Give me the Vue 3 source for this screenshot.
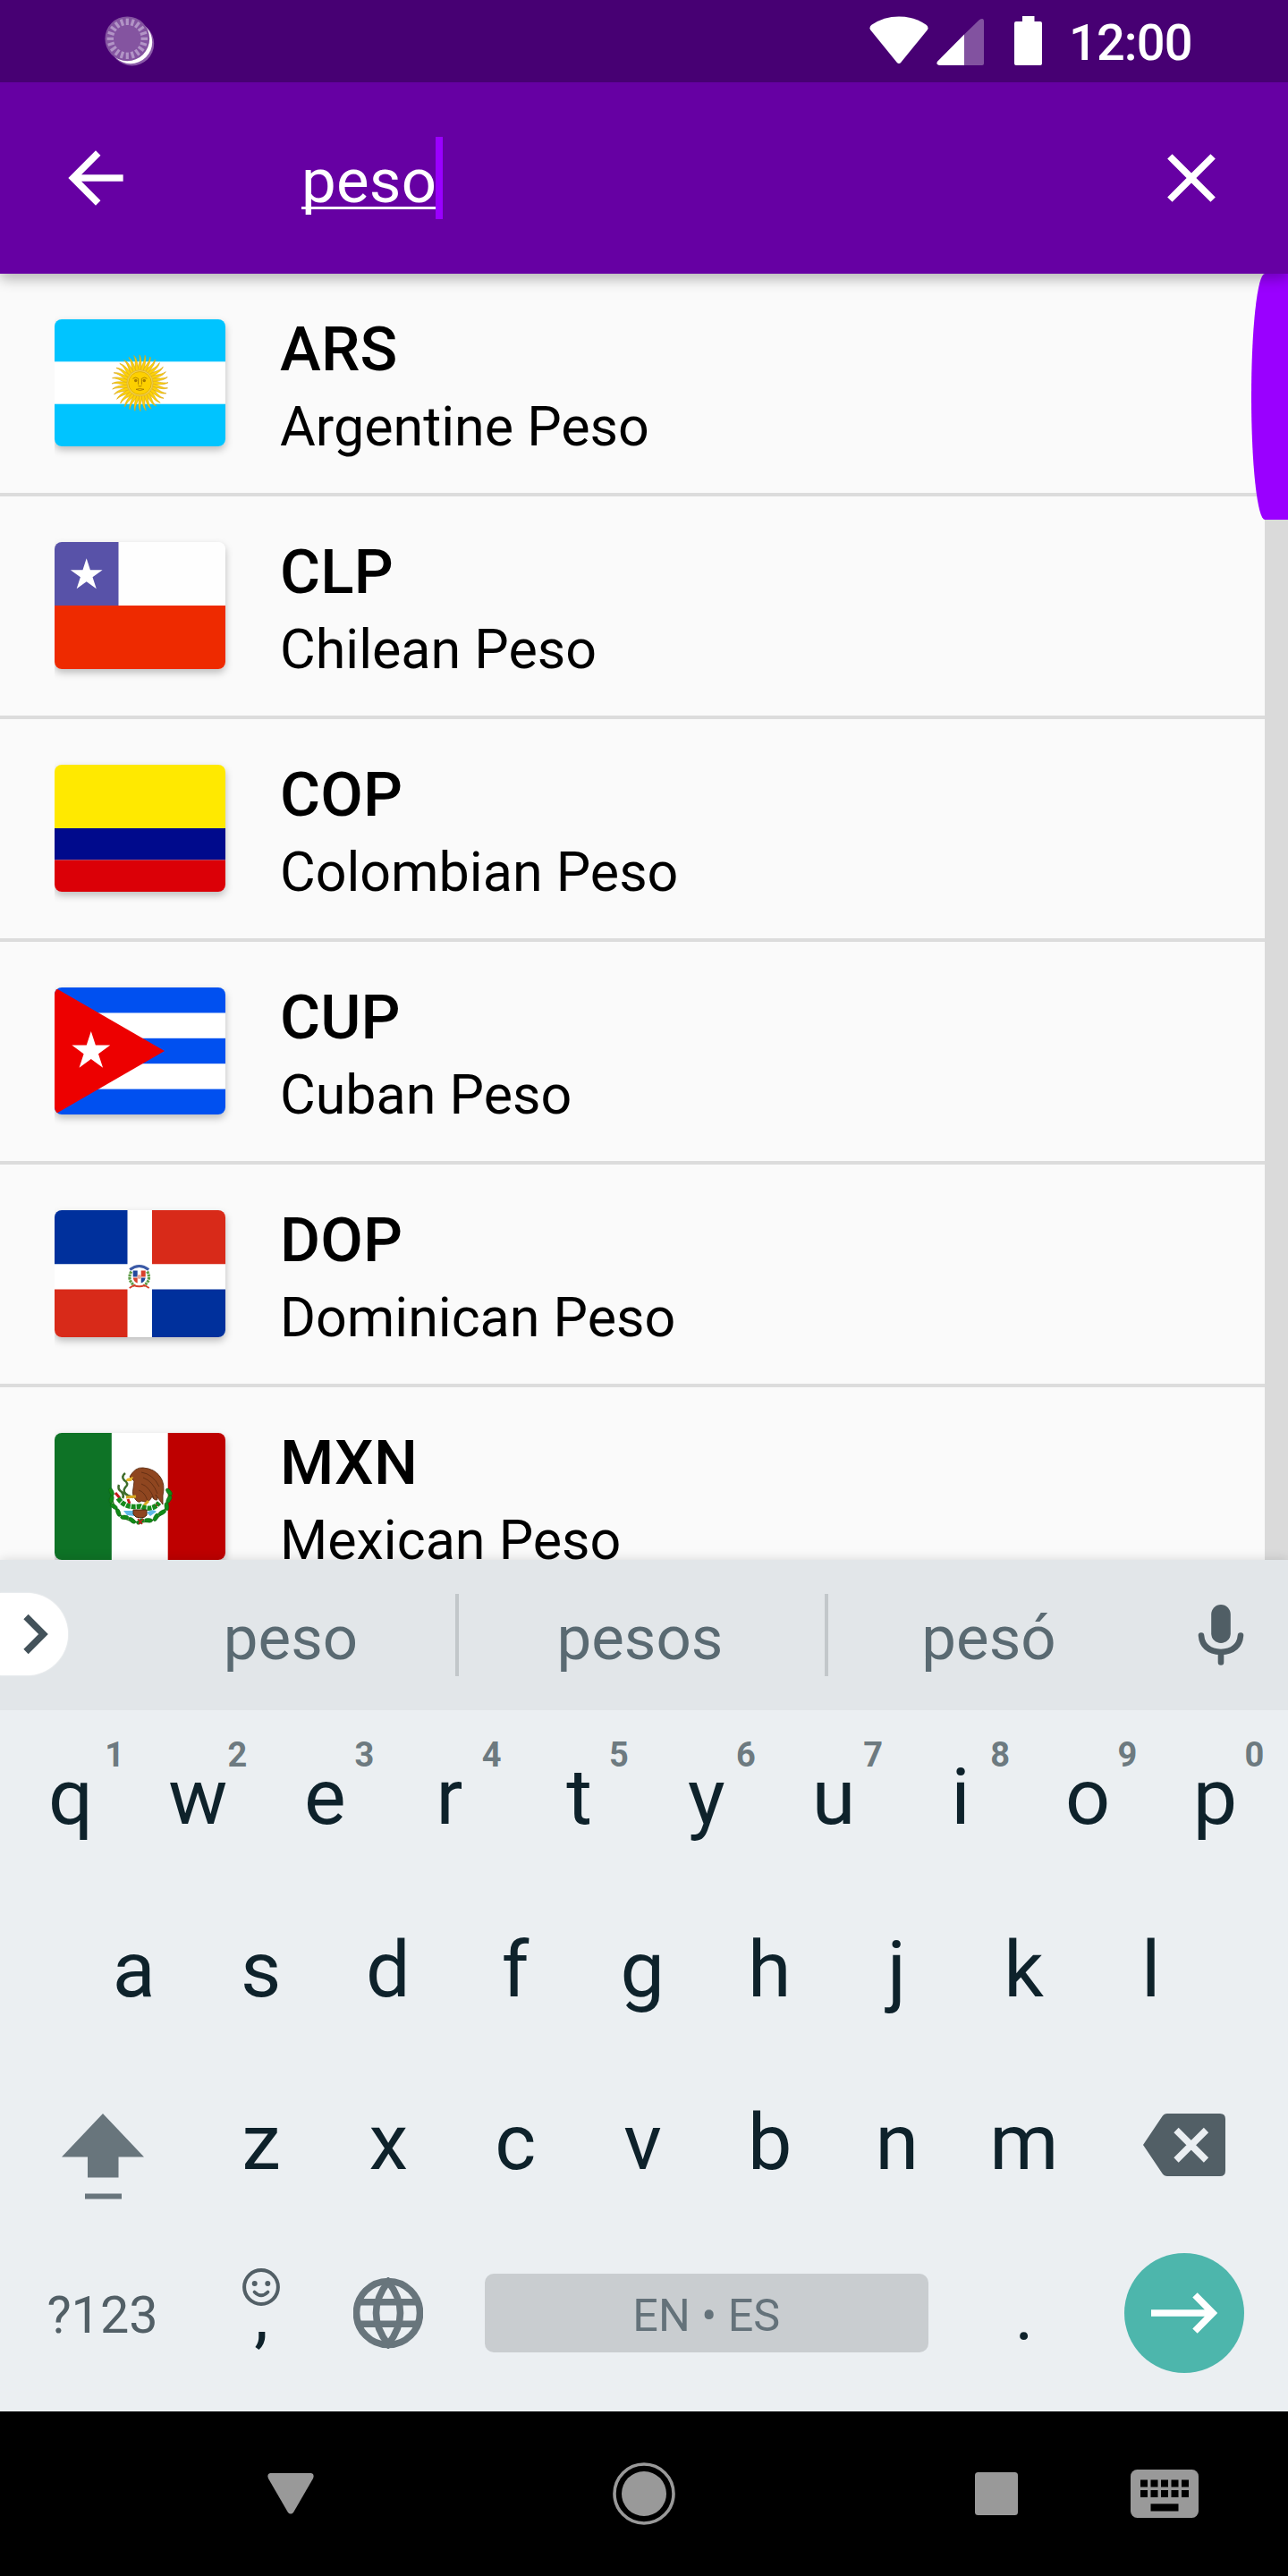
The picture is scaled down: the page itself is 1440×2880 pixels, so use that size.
<script setup>
const currencies = [
  { code: 'ARS', name: 'Argentine Peso' },
  { code: 'CLP', name: 'Chilean Peso' },
  { code: 'COP', name: 'Colombian Peso' },
  { code: 'CUP', name: 'Cuban Peso' },
  { code: 'DOP', name: 'Dominican Peso' },
  { code: 'MXN', name: 'Mexican Peso' },
]

const topKeys = 'qwertyuiop'.split('').map((letter, i) => ({ letter, digit: (i + 1) % 10 }))
const homeKeys = 'asdfghjkl'.split('')
const bottomKeys = 'zxcvbnm'.split('')

// angles helper for radial marks
const ring = (n) => Array.from({ length: n }, (_, i) => (i * 360) / n)
const keyDots = [0, 1, 2, 3, 4]
// wreath leaves below the eagle: x, y, rotation
const leaves = Array.from({ length: 13 }, (_, i) => {
  const a = ((-8 + i * (196 / 12)) * Math.PI) / 180
  return { x: 95.8 + 32.5 * Math.cos(a), y: 70 + 29 * Math.sin(a), r: (a * 180) / Math.PI + 60 + (i % 2) * 50 }
})
</script>

<template>
  <div class="screen">
    <div class="status">
      <svg class="sync" width="56" height="58" viewBox="117 17 56 58">
        <circle cx="147.6" cy="48.8" r="24.6" fill="#8a5aa8" />
        <circle cx="146" cy="47" r="24.2" fill="#fff" />
        <circle cx="142.3" cy="43.3" r="24.9" fill="#8454a0" />
        <g stroke="#b294c6" stroke-width="3.2">
          <line v-for="a in ring(20)" :key="a" x1="142.3" y1="20.6" x2="142.3" y2="28" :transform="`rotate(${a} 142.3 43.3)`" />
        </g>
      </svg>
      <svg class="tray" width="200" height="60" viewBox="970 16 200 60" fill="#fff">
        <path d="M1007.5 69.5Q1005 72.500 1002.500 69.500L973.600 34Q971 30.500 974.500 27.800Q988 18.500 1005 18.500Q1022 18.500 1035.500 27.800Q1039 30.500 1036.400 34Z" />
        <path d="M1078 38.500V73H1050Q1046 72 1048 68.800Z" />
        <path d="M1078 38.500L1094.500 22.500Q1100 19 1100 24V71Q1100 73 1098 73H1078Z" opacity=".32" />
        <path d="M1143 18H1156.500V24H1163Q1165 24 1165 26V71Q1165 73 1163 73H1136Q1134 73 1134 71V26Q1134 24 1136 24H1143Z" />
      </svg>
      <span class="clock">12:00</span>
    </div>

    <header class="appbar">
      <svg class="back" width="92" height="92" viewBox="0 0 24 24" fill="#fff">
        <path d="M20 11H7.830l5.590-5.590L12 4l-8 8 8 8 1.410-1.410L7.830 13H20z" />
      </svg>
      <div class="query"><span class="typed">peso</span><i class="caret"></i></div>
      <svg class="clear" width="92" height="92" viewBox="0 0 24 24" fill="#fff">
        <path d="M19 6.410L17.590 5 12 10.590 6.410 5 5 6.410 10.590 12 5 17.590 6.410 19 12 13.410 17.590 19 19 17.590 13.410 12z" />
      </svg>
    </header>

    <main class="list">
      <div v-for="c in currencies" :key="c.code" class="row">
        <div class="flag">
          <svg v-if="c.code === 'ARS'" viewBox="0 0 191 142">
            <rect width="191" height="142" fill="#00c4ff" />
            <rect y="47.300" width="191" height="47.400" fill="#fff" />
            <g transform="translate(95.500 71.300)">
              <g fill="#fcd20a" stroke="#d9a514" stroke-width=".6">
                <path v-for="a in ring(32)" :key="a" d="M-1.900 -14C-3 -20 .8 -23 -.6 -31.500C2.800 -26 .6 -21 1.900 -14Z" :transform="`rotate(${a})`" />
              </g>
              <circle r="14.600" fill="#f5d74a" stroke="#e0b93a" stroke-width="1" />
              <circle r="12.800" fill="#fdd000" stroke="#d9a400" stroke-width=".7" />
              <g fill="none" stroke="#a87c00" stroke-width=".9">
                <path d="M-8 -5Q-5 -7.500 -1.800 -5L-2 1.500M8 -5Q5 -7.500 1.800 -5L2 1.500M-2 3Q0 4.500 2 3M-4.500 7Q0 5.500 4.500 7Q0 9.500 -4.500 7" />
              </g>
              <circle cx="-4.800" cy="-2.800" r="1.700" fill="#a87c00" />
              <circle cx="4.800" cy="-2.800" r="1.700" fill="#a87c00" />
            </g>
          </svg>
          <svg v-else-if="c.code === 'CLP'" viewBox="0 0 191 142">
            <rect width="191" height="71" fill="#fefefe" />
            <rect width="71.500" height="71" fill="#5852a8" />
            <rect y="71" width="191" height="71" fill="#ee2a00" />
            <polygon fill="#fff" points="0,-18.800 4.220,-5.810 17.880,-5.810 6.830,2.220 11.050,15.210 0,7.180 -11.050,15.210 -6.830,2.220 -17.880,-5.810 -4.220,-5.810" transform="translate(35.700 37)" />
          </svg>
          <svg v-else-if="c.code === 'COP'" viewBox="0 0 191 142">
            <rect width="191" height="71" fill="#ffe900" />
            <rect y="71" width="191" height="35.500" fill="#000a8c" />
            <rect y="106.500" width="191" height="35.500" fill="#db0007" />
          </svg>
          <svg v-else-if="c.code === 'CUP'" viewBox="0 0 191 142">
            <rect width="191" height="142" fill="#0050f0" />
            <rect y="28.400" width="191" height="28.400" fill="#fff" />
            <rect y="85.200" width="191" height="28.400" fill="#fff" />
            <path d="M0 0L123 71L0 142Z" fill="#ed0000" />
            <polygon fill="#fff" points="0,-18.800 4.220,-5.810 17.880,-5.810 6.830,2.220 11.050,15.210 0,7.180 -11.050,15.210 -6.830,2.220 -17.880,-5.810 -4.220,-5.810" transform="translate(40.800 71.500) scale(1.200)" />
          </svg>
          <svg v-else-if="c.code === 'DOP'" viewBox="0 0 191 142">
            <rect width="191" height="142" fill="#fff" />
            <path d="M0 0H81.500V60.300H0ZM109 88.500H191V142H109Z" fill="#00309c" />
            <path d="M109 0H191V60.300H109ZM0 88.500H81.500V142H0Z" fill="#d82a19" />
            <g transform="translate(94.700 74.500)">
              <path d="M-10.500 -8Q0 -16 10.500 -8" fill="none" stroke="#3b5aa6" stroke-width="3" />
              <path d="M-9 -6Q-14 4 -5 10" fill="none" stroke="#5e9b45" stroke-width="3.200" stroke-dasharray="2.600 .8" />
              <path d="M9 -6Q14 4 5 10" fill="none" stroke="#5e9b45" stroke-width="3.200" stroke-dasharray="2.600 .8" />
              <path d="M-7 -7H-2V0H-7Z M2 1H7Q6 6 2 7Z" fill="#23489b" />
              <path d="M2 -7H7V0H2Z M-7 1H-2V7Q-6 6 -7 1Z" fill="#d8402c" />
              <circle r="2.400" fill="#e7a79a" />
              <path d="M-11 12.500L-6 9.500Q0 12 6 9.500L11 12.500" fill="none" stroke="#d8402c" stroke-width="2" />
            </g>
          </svg>
          <svg v-else viewBox="0 0 191 142">
            <rect width="191" height="142" fill="#fff" />
            <rect width="63.800" height="142" fill="#0e7326" />
            <rect x="126.700" width="64.300" height="142" fill="#be0000" />
            <path d="M64 68Q66 99 96 100Q126 99 128 68" fill="none" stroke="#3c7d2c" stroke-width="1.500" />
            <ellipse v-for="(l, i) in leaves" :key="i" rx="4.600" ry="2.300" fill="#118a17" stroke="#0b5d10" stroke-width=".5" :transform="`translate(${l.x} ${l.y}) rotate(${l.r})`" />
            <path d="M84 49Q90 38 99 39Q112 40 118 49Q124 57 121 70L121 80L113 69Q117 76 113 75Q110 74 109 71Q106 78 101 77L97 76Q94 79 91 75Q86 70 88 62L89 54Z" fill="#8f4620" stroke="#5b2a10" stroke-width=".9" />
            <path d="M97 44Q110 46 117 60M99 50Q110 54 115 68M97 57Q106 60 111 73M94 64Q101 66 104 76" fill="none" stroke="#5b2a10" stroke-width=".8" />
            <path d="M88 49L81 51L79 54L86 54Z" fill="#e5b72b" />
            <path d="M79 45Q74 49 78 53Q84 57 79 61Q75 66 82 70L88 72M72 58Q70 63 75 66Q78 70 76 73" fill="none" stroke="#3f6d2c" stroke-width="2.600" />
            <path d="M80 72L91 71M100 81L105 76" stroke="#d8a820" stroke-width="3" />
            <path d="M68 67L73 73M82 74L84 79M112 82L117 79" stroke="#c11b1b" stroke-width="3" />
            <path d="M71 73Q79 85 96 82Q109 88 117 78" fill="none" stroke="#168a1b" stroke-width="5.500" stroke-dasharray="5 1" />
            <path d="M77 87H89V93L81 92Z M103 89Q110 84 114 88L107 93Z" fill="#5fb9e6" />
            <path d="M88 86H103V92Q101 95 96 95Q90 95 88 91Z" fill="#8f4620" stroke="#4c2810" />
            <path d="M93 96L98 102M99 96L94 102" stroke="#c11b1b" stroke-width="1.600" />
          </svg>
        </div>
        <div class="labels">
          <div class="code">{{ c.code }}</div>
          <div class="name">{{ c.name }}</div>
        </div>
      </div>
      <div class="track"><div class="thumb"></div></div>
    </main>

    <section class="keyboard">
      <div class="strip">
        <div class="chipcol">
          <div class="chip">
            <svg width="28" height="46" viewBox="0 0 28 46"><path d="M3 3.500L22.500 23L3 42.500" fill="none" stroke="#43525a" stroke-width="7.500" /></svg>
          </div>
        </div>
        <div class="word first">peso</div>
        <i class="sep"></i>
        <div class="word second">pesos</div>
        <i class="sep"></i>
        <div class="word third">pesó</div>
        <div class="mic">
          <svg width="52" height="70" viewBox="0 0 52 70">
            <rect x="15.200" y="1" width="21.600" height="43" rx="10.800" fill="#505e65" />
            <path d="M4 35.500Q5.500 53 26 54Q46.500 53 48 35.500M26 54V65.500" fill="none" stroke="#505e65" stroke-width="6.600" stroke-linecap="round" />
          </svg>
        </div>
      </div>

      <div class="keys">
        <div v-for="k in topKeys" :key="k.letter" class="key" :class="{ narrow: k.letter === 'r' }">{{ k.letter }}<sup class="digit" :class="{ one: k.digit === 1 }">{{ k.digit }}</sup></div>
      </div>
      <div class="keys home">
        <div v-for="k in homeKeys" :key="k" class="key">{{ k }}</div>
      </div>
      <div class="keys">
        <div class="key wide">
          <svg class="shift" width="92" height="96" viewBox="0 0 92 96" fill="#68757c">
            <path d="M46 0L92 48.500H63.500V71.500H29V48.500H0Z" /><rect x="26" y="89.500" width="41" height="6" />
          </svg>
        </div>
        <div v-for="k in bottomKeys" :key="k" class="key">{{ k }}</div>
        <div class="key wide end">
          <svg class="erase" width="92" height="70" viewBox="0 0 92 70">
            <path d="M0 35L21.500 3Q23.500 0 27 0H86Q92 0 92 6V64Q92 70 86 70H27Q23.500 70 21.500 67Z" fill="#525f66" />
            <path d="M37 18.500L70.500 52M70.500 18.500L37 52" stroke="#ebeff2" stroke-width="7.500" />
          </svg>
        </div>
      </div>
      <div class="keys last">
        <div class="key wide sym">?123</div>
        <div class="key punct">,
          <svg class="smiley" width="42" height="42" viewBox="0 0 42 42">
            <circle cx="21" cy="21" r="18.900" fill="none" stroke="#525f66" stroke-width="4" />
            <circle cx="13.700" cy="17" r="3" fill="#525f66" /><circle cx="28.300" cy="17" r="3" fill="#525f66" />
            <path d="M13.500 26.500Q21 34 28.500 26.500" fill="none" stroke="#525f66" stroke-width="3.800" stroke-linecap="round" />
          </svg>
        </div>
        <div class="key">
          <svg width="78" height="80" viewBox="0 0 78 80" fill="none" stroke="#68757c" stroke-width="7.600">
            <circle cx="39" cy="40" r="35.500" />
            <path d="M6 27.800H72M6 52.200H72" />
            <path d="M39 5Q25.500 22 25.500 40Q25.500 58 39 75Q52.500 58 52.500 40Q52.500 22 39 5Z" />
          </svg>
        </div>
        <div class="space">EN • ES</div>
        <div class="key punct">.</div>
        <div class="key wide end">
          <div class="enter">
            <svg width="74" height="48" viewBox="0 0 74 48" fill="none" stroke="#fff" stroke-width="7.600">
              <path d="M0 24H67M49 3.800L69 24L49 44.200" />
            </svg>
          </div>
        </div>
      </div>
    </section>

    <nav class="nav">
      <svg class="n-back" width="52" height="46" viewBox="0 0 52 46"><path d="M3 0H49Q53 1 51 6L29 44Q26 47 23 44L1 6Q-1 1 3 0Z" fill="#999" /></svg>
      <svg class="n-home" width="70" height="70" viewBox="0 0 70 70"><circle cx="35" cy="35" r="33" fill="none" stroke="#999" stroke-width="3.600" /><circle cx="35" cy="35" r="25" fill="#999" /></svg>
      <svg class="n-recent" width="48" height="48" viewBox="0 0 48 48"><rect width="48" height="48" rx="3.500" fill="#999" /></svg>
      <svg class="n-ime" width="76" height="54" viewBox="0 0 76 54">
        <rect width="76" height="54" rx="7.500" fill="#999" />
        <template v-for="i in keyDots" :key="i">
          <rect :x="11 + i * 11.500" y="11.500" width="8" height="8" />
          <rect :x="11 + i * 11.500" y="23" width="8" height="8" />
        </template>
        <rect x="22.500" y="38.300" width="31" height="8.200" />
      </svg>
    </nav>
  </div>
</template>

<style>
body { margin: 0; }
</style>

<style scoped>
.screen {
  width: 1440px;
  height: 2880px;
  display: flex;
  flex-direction: column;
  overflow: hidden;
  font-family: Roboto, sans-serif;
  background: #fafafa;
}
.screen svg { display: block; flex: none; }
.status {
  height: 92px;
  flex: none;
  display: flex;
  align-items: flex-start;
  background: #470073;
  position: relative;
  z-index: 3;
}
.sync { margin: 17px 0 0 117px; }
.status .tray { margin: 16px 0 0 797px; }
.clock {
  margin: 15px 0 0 25px;
  color: #fff;
  font-size: 56px;
  line-height: 66px;
  font-weight: 500;
  letter-spacing: -.9px;
}
.appbar {
  height: 214px;
  flex: none;
  display: flex;
  align-items: center;
  background: #6600a3;
  box-shadow: 0 6px 14px rgba(0, 0, 0, .28);
  position: relative;
  z-index: 2;
}
.back { margin-left: 61px; }
.query { margin-left: 184px; flex: 1; display: flex; align-items: center; height: 92px; }
.typed {
  color: #fff;
  font-size: 69px;
  line-height: 80px;
  padding-top: 7px;
  letter-spacing: .25px;
  text-decoration: underline;
  text-decoration-thickness: 3px;
  text-decoration-skip-ink: none;
  text-underline-offset: 5px;
}
.caret { width: 8px; height: 92px; margin-left: -1px; background: #9a00ff; }
.clear { margin-right: 62px; }

.list { flex: 1; min-height: 0; overflow: hidden; position: relative; }
.row {
  height: 245px;
  border-bottom: 4px solid #dcdcdc;
  display: flex;
  align-items: flex-start;
}
.flag {
  width: 191px;
  height: 142px;
  margin: 51px 0 0 61px;
  border-radius: 8px;
  box-shadow: 0 4px 9px rgba(0, 0, 0, .25);
  clip-path: inset(-12px -14px -18px 0);
}
.flag svg { width: 191px; height: 142px; border-radius: 8px; }
.labels { margin: 44px 0 0 61px; color: #000; }
.code { font-size: 69px; line-height: 81px; font-weight: 500; letter-spacing: .2px; }
.name { margin-top: 10px; font-size: 61px; line-height: 72px; }
.track { position: absolute; right: 0; top: 0; bottom: 0; width: 26px; background: #dadada; }
.thumb {
  width: 41px;
  height: 275px;
  margin-left: -15px;
  background: #9a00ff;
  border-radius: 15px 0 0 15px / 137.500px 0 0 137.500px;
}

.keyboard {
  height: 952px;
  flex: none;
  background: #ebeff2;
  box-shadow: 0 0 12px rgba(0, 0, 0, .14);
  position: relative;
  z-index: 1;
}
.strip { height: 168px; display: flex; align-items: center; background: #e2e6e9; }
.chipcol { width: 143px; }
.chip {
  width: 76px;
  height: 92px;
  margin-top: -2px;
  border-radius: 0 46px 46px 0;
  background: #fff;
  display: flex;
  align-items: center;
  padding-left: 26px;
  box-sizing: border-box;
  box-shadow: 0 0 2px #fff;
}
.word {
  box-sizing: border-box;
  padding-top: 7px;
  padding-right: 2px;
  text-align: center;
  font-size: 69px;
  line-height: 80px;
  color: #5a6a72;
}
.first { width: 366px; }
.second { width: 409px; padding-right: 4px; }
.third { width: 361px; }
.sep { width: 4px; height: 92px; background: #c2c7ca; }
.mic { flex: 1; display: flex; justify-content: center; padding-left: 2px; }

.keys { height: 193px; padding: 0 8px; display: flex; align-items: stretch; }
.home { padding: 0 78.500px; }
.last { height: 190px; }
.key {
  width: 142.150px;
  flex: none;
  box-sizing: border-box;
  position: relative;
  display: flex;
  align-items: center;
  justify-content: center;
  font-size: 88px;
  line-height: 104px;
  color: #0e222b;
}
.narrow { padding-right: 6px; }
.wide { width: 213px; }
.end { width: 216px; }
.digit {
  position: absolute;
  right: 16px;
  top: 28px;
  font-size: 38px;
  line-height: 44px;
  font-weight: 700;
  color: #6d7a80;
}
.one { right: 11px; }
.shift { margin-top: 32px; }
.erase { margin-top: 7px; }
.sym { font-size: 57.500px; padding-top: 5px; color: #525f66; }
.punct { font-size: 80px; padding-top: 5px; }
.smiley { position: absolute; left: 50px; top: 45px; }
.space {
  width: 496px;
  height: 88px;
  box-sizing: border-box;
  padding-top: 5px;
  margin: 51px 36.200px 0 36.500px;
  border-radius: 10px;
  background: #c9cdd0;
  color: #64727a;
  font-size: 50.300px;
  line-height: 84px;
  text-align: center;
}
.enter {
  width: 134px;
  height: 134px;
  border-radius: 50%;
  background: #4db6ac;
  display: flex;
  align-items: center;
  justify-content: center;
}

.nav { height: 184px; flex: none; display: flex; align-items: center; background: #000; position: relative; z-index: 2; }
.n-back { margin-left: 299px; }
.n-home { margin-left: 333.500px; }
.n-recent { margin-left: 335.500px; }
.n-ime { margin-left: 126px; }
</style>
